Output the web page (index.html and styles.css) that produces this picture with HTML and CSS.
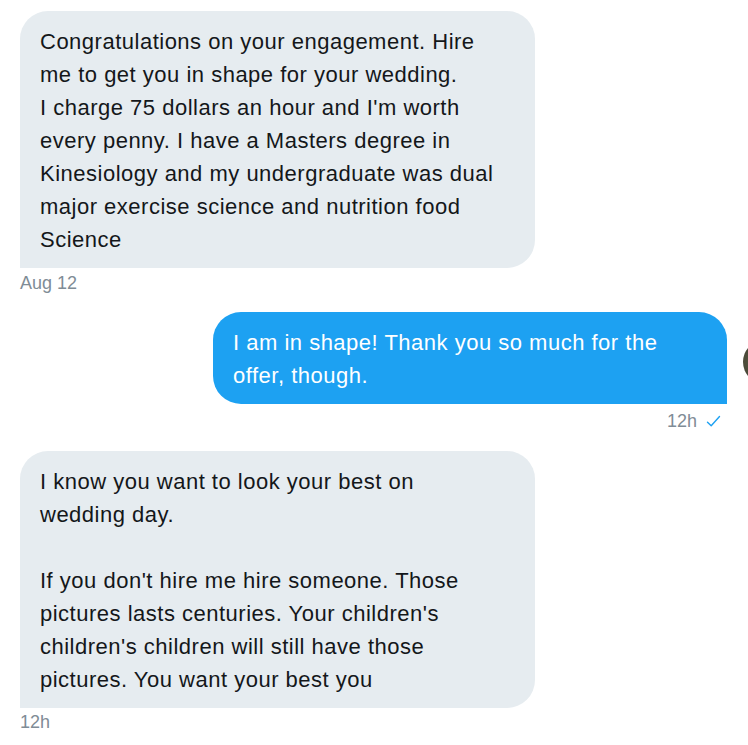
FILE: index.html
```html
<!DOCTYPE html>
<html lang="en">
<head>
    <meta charset="UTF-8">
    <meta name="viewport" content="width=device-width, initial-scale=1.0">
    <title>Messages</title>
    <link rel="stylesheet" href="styles.css">
</head>
<body>
    <div class="thread">
        <div class="msg received">
            <div class="bubble">
                Congratulations on your engagement. Hire<br>
                me to get you in shape for your wedding.<br>
                I charge 75 dollars an hour and I'm worth<br>
                every penny. I have a Masters degree in<br>
                Kinesiology and my undergraduate was dual<br>
                major exercise science and nutrition food<br>
                Science
            </div>
            <div class="meta">Aug 12</div>
        </div>

        <div class="msg sent">
            <div class="row">
                <div class="bubble">
                    I am in shape! Thank you so much for the<br>
                    offer, though.
                </div>
                <div class="avatar-clip"><div class="avatar"></div></div>
            </div>
            <div class="meta">
                12h
                <svg class="check" width="15" height="13" viewBox="0 0 15 13">
                    <path d="M1.5 7.2 L5.2 10.8 L13.5 1.5" fill="none" stroke="#1da1f2" stroke-width="1.4" stroke-linecap="round" stroke-linejoin="round"/>
                </svg>
            </div>
        </div>

        <div class="msg received">
            <div class="bubble">
                I know you want to look your best on<br>
                wedding day.<br>
                <br>
                If you don't hire me hire someone. Those<br>
                pictures lasts centuries. Your children's<br>
                children's children will still have those<br>
                pictures. You want your best you
            </div>
            <div class="meta">12h</div>
        </div>
    </div>
</body>
</html>
```

FILE: styles.css
```css
body {
    margin: 0;
    background: #ffffff;
    font-family: 'Liberation Sans', Arial, sans-serif;
    color: #14171a;
}
.thread {
    width: 748px;
    padding: 11px 0 0 20px;
    box-sizing: border-box;
}
.msg {
    display: flex;
    flex-direction: column;
}
.bubble {
    font-size: 22px;
    letter-spacing: 0.5px;
    line-height: 33px;
    padding: 14px 20px 12px 20px;
    white-space: nowrap;
}
.received .bubble {
    width: 515px;
    box-sizing: border-box;
    background: #e6ecf0;
    border-radius: 28px 28px 28px 0;
}
.sent {
    margin-top: 19px;
    align-items: flex-end;
}
.row {
    display: flex;
    align-items: center;
    gap: 16px;
}
.sent .bubble {
    width: 514px;
    box-sizing: border-box;
    background: #1da1f2;
    color: #ffffff;
    border-radius: 28px 28px 0 28px;
}
.avatar-clip {
    flex: none;
    width: 5px;
    height: 44px;
    overflow: hidden;
    margin-top: 8px;
}
.avatar {
    width: 44px;
    height: 44px;
    border-radius: 50%;
    background: radial-gradient(circle at 30% 50%, #5a5a44, #2c2c22);
}
.meta {
    font-size: 18px;
    line-height: 20px;
    color: #7f8c96;
    margin-top: 5px;
}
.sent .meta {
    margin-top: 7px;
    margin-right: 27px;
    display: flex;
    align-items: center;
    gap: 9px;
}
.sent + .received {
    margin-top: 20px;
}
.sent + .received .meta {
    margin-top: 4px;
}
```
